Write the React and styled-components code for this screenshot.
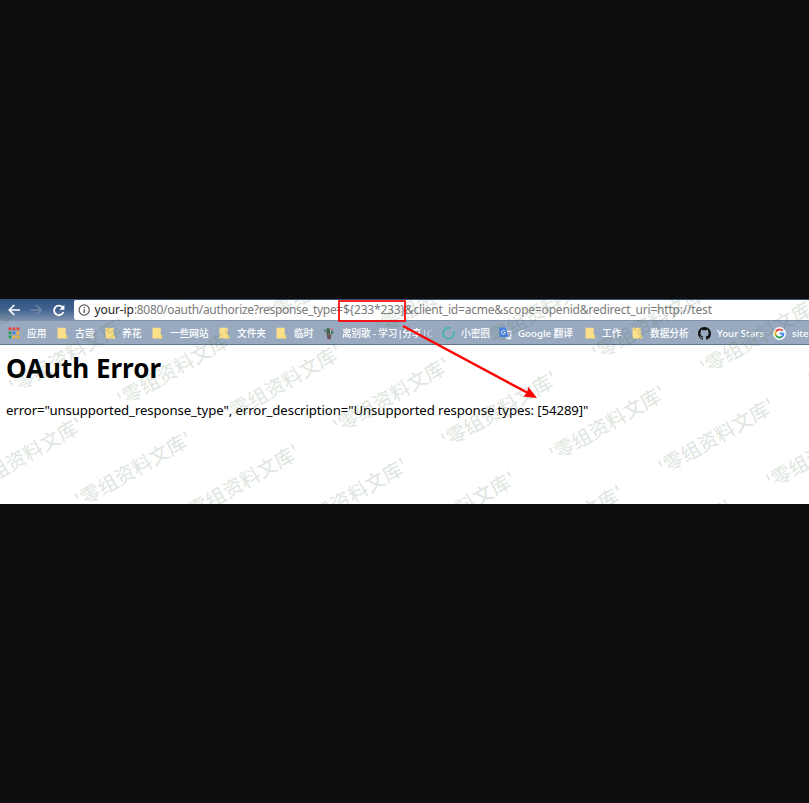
import React from "react";
import styled, { createGlobalStyle } from "styled-components";

const Global = createGlobalStyle`
  body { margin: 0; background: #0e0e0e; }
  * { box-sizing: border-box; }
`;

const sans = `"Noto Sans", "Noto Sans CJK SC", sans-serif`;

const Stage = styled.main`
  width: 809px;
  height: 803px;
  display: flex;
  flex-direction: column;
  justify-content: flex-start;
  padding-top: 299px;
  background: #0e0e0e;
  overflow: hidden;
`;

const Browser = styled.section`
  position: relative;
  height: 205px;
  flex: none;
  display: flex;
  flex-direction: column;
  background: #fff;
  overflow: hidden;
  font-family: ${sans};
`;

const Toolbar = styled.div`
  height: 22px;
  flex: none;
  display: flex;
  align-items: center;
  background: linear-gradient(#34547f, #3f608f 45%, #8094b0 100%);
`;

const NavButtons = styled.nav`
  width: 74px;
  display: flex;
  align-items: center;
  gap: 10px;
  padding-left: 8px;
`;

const AddressBar = styled.div`
  flex: 1;
  height: 20px;
  display: flex;
  align-items: center;
  padding-left: 4px;
  background: #fff;
  border-radius: 2px 0 0 2px;
  white-space: nowrap;
`;

const Url = styled.span`
  margin-left: 4.5px;
  font-size: 12px;
  line-height: 20px;
  letter-spacing: -0.31px;
  color: #7a7a7a;
`;

const Host = styled.span`
  color: #1d1d1d;
  letter-spacing: -0.1px;
`;

const Query = styled.span`
  letter-spacing: -0.19px;
`;

const Bookmarks = styled.div`
  height: 24px;
  flex: none;
  display: flex;
  align-items: center;
  padding: 1px 0 0 8px;
  background: #99aac0;
  border-bottom: 1px solid #62758e;
`;

const Bookmark = styled.a`
  flex: none;
  width: ${(p) => p.$width}px;
  display: flex;
  align-items: center;
  overflow: hidden;
`;

const IconSlot = styled.span`
  flex: none;
  width: ${(p) => p.$width}px;
  display: flex;
`;

const Label = styled.span`
  padding-top: 1px;
  font-size: 9.7px;
  font-weight: 500;
  line-height: 20px;
  color: #fff;
  white-space: nowrap;
  letter-spacing: ${(p) => (p.$fade ? "-0.15px" : "0")};
  mask-image: ${(p) => (p.$fade ? "linear-gradient(90deg, #000 82%, rgba(0, 0, 0, 0.25))" : "none")};
`;

const Page = styled.article`
  flex: 1;
  padding: 4px 6px;
  color: #000;
`;

const Title = styled.h1`
  margin: 0;
  font-size: 26px;
  line-height: 38px;
  font-weight: 700;
`;

const Message = styled.p`
  margin: 13px 0 0;
  font-size: 13.2px;
  line-height: 20px;
  white-space: nowrap;
  letter-spacing: -0.09px;
`;

const Overlay = styled.div`
  position: absolute;
  inset: 0;
  pointer-events: none;
`;

const Watermark = styled.span`
  position: absolute;
  left: ${(p) => p.$x}px;
  top: ${(p) => p.$y}px;
  transform: translate(-50%, -50%) rotate(-30deg);
  font-family: "Noto Sans CJK SC", sans-serif;
  font-size: 19.8px;
  font-weight: 500;
  line-height: 24px;
  white-space: nowrap;
  color: rgba(60, 105, 60, 0.16);
`;

const Annotation = styled.svg`
  position: absolute;
  left: 0;
  top: 0;
`;

const Arrow = ({ color, forward }) => (
  <svg width="12" height="12" viewBox="0 0 12 12" fill="none" stroke={color} strokeWidth="1.7">
    <path d={forward ? "M0.5 6H11M6.2 1L11.2 6L6.2 11" : "M12 6H1.5M6.3 1L1.3 6L6.3 11"} />
  </svg>
);

const Reload = () => (
  <svg width="13" height="13" viewBox="0 0 13 13" fill="none">
    <path d="M10.6 3.4A4.8 4.8 0 1 0 11.4 8" stroke="#fff" strokeWidth="1.8" />
    <path d="M12.4 0.7V5.8H7.3Z" fill="#fff" />
  </svg>
);

const Info = () => (
  <svg width="12" height="12" viewBox="0 0 12 12" fill="none">
    <circle cx="6.2" cy="6" r="5.1" stroke="#555" strokeWidth="1.2" />
    <path d="M6.2 5.2V9M6.2 3V4.3" stroke="#555" strokeWidth="1.3" />
  </svg>
);

const Apps = () => {
  const colors = ["#e5443a", "#e5443a", "#e5443a", "#2d9a58", "#3f7de0", "#edb62b", "#2d9a58", "#edb62b", "#edb62b"];
  return (
    <svg width="12" height="12" viewBox="0 0 12 12">
      {colors.map((c, i) => (
        <rect key={i} x={(i % 3) * 4 + 0.5} y={Math.floor(i / 3) * 4 + 0.5} width="2.8" height="2.8" fill={c} />
      ))}
    </svg>
  );
};

const Folder = () => (
  <svg width="11" height="12" viewBox="0 0 11 12">
    <path d="M0.5 0.8H8.7V8H10V11.5H0.5Z" fill="#fbe089" />
    <path d="M8.7 8H10.2V11.5H7.8V9.5Z" fill="#f3d577" />
  </svg>
);

const Cactus = () => (
  <svg width="10" height="13" viewBox="0 0 10 13">
    <path d="M2.4 7.5V2.6Q2.4 0.9 4.2 0.9T6 2.6V7.5Z" fill="#46664f" />
    <path d="M7 3.4H9.4V6.5L7 7.5Z" fill="#4c7a58" />
    <path d="M0.8 2V4.5H2.6" stroke="#5a8063" strokeWidth="1.2" fill="none" />
    <circle cx="7.6" cy="2" r="1.1" fill="#d3737c" />
    <path d="M2.6 7.5H7.4L6.6 12.3H3.6Z" fill="#6e5450" />
  </svg>
);

const Ring = () => (
  <svg width="13" height="13" viewBox="0 0 13 13" fill="none">
    <path d="M8.3 1.2A5.4 5.4 0 1 0 11.4 4" stroke="#3bb59b" strokeWidth="1.5" />
  </svg>
);

const Translate = () => (
  <svg width="13" height="13" viewBox="0 0 13 13">
    <path d="M5 3.5H12.4V12.5H7.5Z" fill="#e4e8ee" />
    <path d="M0.4 0.4H6.7L9.6 10H0.4Z" fill="#4680e8" />
    <path d="M6.1 4.2A2 2 0 1 0 6.4 5.5H4.6" stroke="#fff" strokeWidth="0.9" fill="none" />
    <path d="M8.4 6H11.8M10 5V6M11 6Q10.5 8.5 8.8 9.5M9 7Q10 9 11.5 9.8" stroke="#6f7d90" strokeWidth="0.7" fill="none" />
  </svg>
);

const GitHub = () => (
  <svg width="13" height="13" viewBox="0 0 16 16">
    <path
      fill="#111"
      d="M8 0C3.58 0 0 3.58 0 8c0 3.54 2.29 6.53 5.47 7.59.4.07.55-.17.55-.38 0-.19-.01-.82-.01-1.49-2.01.37-2.53-.49-2.69-.94-.09-.23-.48-.94-.82-1.13-.28-.15-.68-.52-.01-.53.63-.01 1.08.58 1.23.82.72 1.21 1.87.87 2.33.66.07-.52.28-.87.51-1.07-1.78-.2-3.64-.89-3.64-3.95 0-.87.31-1.59.82-2.15-.08-.2-.36-1.02.08-2.12 0 0 .67-.21 2.2.82.64-.18 1.32-.27 2-.27s1.36.09 2 .27c1.53-1.04 2.2-.82 2.2-.82.44 1.1.16 1.92.08 2.12.51.56.82 1.27.82 2.15 0 3.07-1.87 3.75-3.65 3.95.29.25.54.73.54 1.48 0 1.07-.01 1.93-.01 2.2 0 .21.15.46.55.38A8.01 8.01 0 0 0 16 8c0-4.42-3.58-8-8-8Z"
    />
  </svg>
);

const Google = () => (
  <svg width="13" height="13" viewBox="0 0 13 13" fill="none" strokeWidth="1.9">
    <circle cx="6.5" cy="6.5" r="6.5" fill="#fff" />
    <path d="M9.5 3.7A4 4 0 0 0 3 4.6" stroke="#e8453c" />
    <path d="M3 4.6A4 4 0 0 0 3 8.6" stroke="#f8bb15" />
    <path d="M3 8.6A4 4 0 0 0 9 9.6" stroke="#34a353" />
    <path d="M9 9.6A4 4 0 0 0 10.5 6.6H6.6" stroke="#4285f4" />
  </svg>
);

const bookmarks = [
  { icon: Apps, label: "应用", width: 49, slot: 19 },
  { icon: Folder, label: "古萤", width: 48, slot: 18 },
  { icon: Folder, label: "养花", width: 47, slot: 17 },
  { icon: Folder, label: "一些网站", width: 67, slot: 18 },
  { icon: Folder, label: "文件夹", width: 57, slot: 18 },
  { icon: Folder, label: "临时", width: 48, slot: 18 },
  { icon: Cactus, label: "离别歌 - 学习|分享|C", width: 118, slot: 18, fade: true },
  { icon: Ring, label: "小密圈", width: 57, slot: 19 },
  { icon: Translate, label: "Google 翻译", width: 86, slot: 19 },
  { icon: Folder, label: "工作", width: 47, slot: 17 },
  { icon: Folder, label: "数据分析", width: 66, slot: 18 },
  { icon: GitHub, label: "Your Stars", width: 75, slot: 19 },
  { icon: Google, label: "site", width: 37, slot: 19 },
];

// Centres of the repeated watermark, on a slanted lattice.
const marks = [];
for (let row = -3; row <= 2; row++) {
  for (let col = -8; col <= 5; col++) {
    const x = 607.4 + col * 108.1 - row * 42.5;
    const y = 123.5 + col * 13.6 + row * 100.5;
    if (x > -60 && x < 870 && y > -34 && y < 240) marks.push([x, y]);
  }
}

export default function App() {
  return (
    <Stage>
      <Global />
      <Browser>
        <Toolbar>
          <NavButtons>
            <Arrow color="#fff" />
            <Arrow color="#7086a8" forward />
            <Reload />
          </NavButtons>
          <AddressBar>
            <Info />
            <Url>
              <Host>your-ip</Host>
              {":8080/oauth/authorize?response_type="}
              <Query>{"${233*233}&client_id=acme&scope=openid&redirect_uri=http://test"}</Query>
            </Url>
          </AddressBar>
        </Toolbar>
        <Bookmarks>
          {bookmarks.map(({ icon: Icon, label, width, slot, fade }) => (
            <Bookmark key={label} $width={width}>
              <IconSlot $width={slot}>
                <Icon />
              </IconSlot>
              <Label $fade={fade}>{label}</Label>
            </Bookmark>
          ))}
        </Bookmarks>
        <Page>
          <Title>OAuth Error</Title>
          <Message>{'error="unsupported_response_type", error_description="Unsupported response types: [54289]"'}</Message>
        </Page>
        <Overlay>
          {marks.map(([x, y]) => (
            <Watermark key={`${x},${y}`} $x={x} $y={y}>
              '零组资料文库'
            </Watermark>
          ))}
        </Overlay>
        <Annotation width="809" height="205" viewBox="0 0 809 205">
          <rect x="339" y="2" width="66" height="20" fill="none" stroke="#f00" strokeWidth="1.7" />
          <path d="M403 27L528 94" stroke="#f00" strokeWidth="2.4" />
          <path d="M537 99L523.5 97.5L527 93.5L528.5 88Z" fill="#f00" />
        </Annotation>
      </Browser>
    </Stage>
  );
}
